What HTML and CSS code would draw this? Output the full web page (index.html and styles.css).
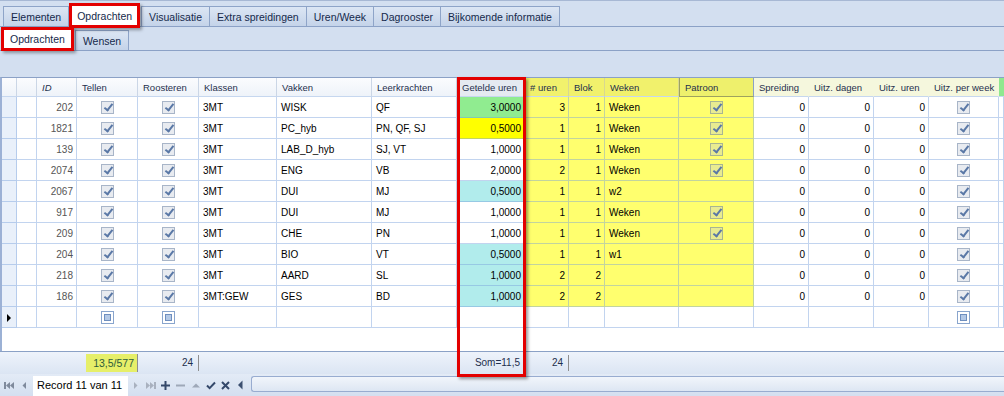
FILE: index.html
```html
<!DOCTYPE html>
<html lang="nl">
<head>
    <meta charset="UTF-8">
    <title>Opdrachten</title>
    <link rel="stylesheet" href="styles.css">
</head>
<body>
<div class="app">
    <div class="tabs tabs-main">
        <div class="tab">Elementen</div>
        <div class="tab active">Opdrachten</div>
        <div class="tab">Visualisatie</div>
        <div class="tab">Extra spreidingen</div>
        <div class="tab">Uren/Week</div>
        <div class="tab">Dagrooster</div>
        <div class="tab">Bijkomende informatie</div>
    </div>
    <div class="tabs tabs-sub">
        <div class="tab active">Opdrachten</div>
        <div class="tab">Wensen</div>
    </div>
    <div class="toolbar"></div>

    <div class="grid-wrap">
        <table class="grid">
            <colgroup>
                <col style="width:15px"><col style="width:20px"><col style="width:40px"><col style="width:61px"><col style="width:61px">
                <col style="width:78px"><col style="width:95px"><col style="width:85px"><col style="width:68px"><col style="width:44px">
                <col style="width:36px"><col style="width:74px"><col style="width:75px"><col style="width:55px"><col style="width:65px">
                <col style="width:55px"><col style="width:70px"><col style="width:5px">
            </colgroup>
            <thead>
                <tr>
                    <th class="ind"></th><th></th><th class="it">ID</th><th>Tellen</th><th>Roosteren</th>
                    <th>Klassen</th><th>Vakken</th><th>Leerkrachten</th><th class="hg">Getelde uren</th><th class="hy"># uren</th>
                    <th class="hy">Blok</th><th class="hy">Weken</th><th class="hp">Patroon</th><th class="hc">Spreiding</th><th class="hc">Uitz. dagen</th>
                    <th class="hc">Uitz. uren</th><th class="hc">Uitz. per week</th><th class="hx"></th>
                </tr>
            </thead>
            <tbody>
                <tr>
                    <td class="ind"></td><td></td><td class="num id">202</td><td class="c"><span class="cb on"></span></td><td class="c"><span class="cb on"></span></td>
                    <td>3MT</td><td>WISK</td><td>QF</td><td class="num green">3,0000</td><td class="num y">3</td>
                    <td class="num y">1</td><td class="y">Weken</td><td class="c y"><span class="cb on"></span></td><td class="num">0</td><td class="num">0</td>
                    <td class="num">0</td><td class="c"><span class="cb on"></span></td><td></td>
                </tr>
                <tr>
                    <td class="ind"></td><td></td><td class="num id">1821</td><td class="c"><span class="cb on"></span></td><td class="c"><span class="cb on"></span></td>
                    <td>3MT</td><td>PC_hyb</td><td>PN, QF, SJ</td><td class="num yellow">0,5000</td><td class="num y">1</td>
                    <td class="num y">1</td><td class="y">Weken</td><td class="c y"><span class="cb on"></span></td><td class="num">0</td><td class="num">0</td>
                    <td class="num">0</td><td class="c"><span class="cb on"></span></td><td></td>
                </tr>
                <tr>
                    <td class="ind"></td><td></td><td class="num id">139</td><td class="c"><span class="cb on"></span></td><td class="c"><span class="cb on"></span></td>
                    <td>3MT</td><td>LAB_D_hyb</td><td>SJ, VT</td><td class="num">1,0000</td><td class="num y">1</td>
                    <td class="num y">1</td><td class="y">Weken</td><td class="c y"><span class="cb on"></span></td><td class="num">0</td><td class="num">0</td>
                    <td class="num">0</td><td class="c"><span class="cb on"></span></td><td></td>
                </tr>
                <tr>
                    <td class="ind"></td><td></td><td class="num id">2074</td><td class="c"><span class="cb on"></span></td><td class="c"><span class="cb on"></span></td>
                    <td>3MT</td><td>ENG</td><td>VB</td><td class="num">2,0000</td><td class="num y">2</td>
                    <td class="num y">1</td><td class="y">Weken</td><td class="c y"><span class="cb on"></span></td><td class="num">0</td><td class="num">0</td>
                    <td class="num">0</td><td class="c"><span class="cb on"></span></td><td></td>
                </tr>
                <tr>
                    <td class="ind"></td><td></td><td class="num id">2067</td><td class="c"><span class="cb on"></span></td><td class="c"><span class="cb on"></span></td>
                    <td>3MT</td><td>DUI</td><td>MJ</td><td class="num cyan">0,5000</td><td class="num y">1</td>
                    <td class="num y">1</td><td class="y">w2</td><td class="c y"></td><td class="num">0</td><td class="num">0</td>
                    <td class="num">0</td><td class="c"><span class="cb on"></span></td><td></td>
                </tr>
                <tr>
                    <td class="ind"></td><td></td><td class="num id">917</td><td class="c"><span class="cb on"></span></td><td class="c"><span class="cb on"></span></td>
                    <td>3MT</td><td>DUI</td><td>MJ</td><td class="num">1,0000</td><td class="num y">1</td>
                    <td class="num y">1</td><td class="y">Weken</td><td class="c y"><span class="cb on"></span></td><td class="num">0</td><td class="num">0</td>
                    <td class="num">0</td><td class="c"><span class="cb on"></span></td><td></td>
                </tr>
                <tr>
                    <td class="ind"></td><td></td><td class="num id">209</td><td class="c"><span class="cb on"></span></td><td class="c"><span class="cb on"></span></td>
                    <td>3MT</td><td>CHE</td><td>PN</td><td class="num">1,0000</td><td class="num y">1</td>
                    <td class="num y">1</td><td class="y">Weken</td><td class="c y"><span class="cb on"></span></td><td class="num">0</td><td class="num">0</td>
                    <td class="num">0</td><td class="c"><span class="cb on"></span></td><td></td>
                </tr>
                <tr>
                    <td class="ind"></td><td></td><td class="num id">204</td><td class="c"><span class="cb on"></span></td><td class="c"><span class="cb on"></span></td>
                    <td>3MT</td><td>BIO</td><td>VT</td><td class="num cyan">0,5000</td><td class="num y">1</td>
                    <td class="num y">1</td><td class="y">w1</td><td class="c y"></td><td class="num">0</td><td class="num">0</td>
                    <td class="num">0</td><td class="c"><span class="cb on"></span></td><td></td>
                </tr>
                <tr>
                    <td class="ind"></td><td></td><td class="num id">218</td><td class="c"><span class="cb on"></span></td><td class="c"><span class="cb on"></span></td>
                    <td>3MT</td><td>AARD</td><td>SL</td><td class="num cyan">1,0000</td><td class="num y">2</td>
                    <td class="num y">2</td><td class="y"></td><td class="c y"></td><td class="num">0</td><td class="num">0</td>
                    <td class="num">0</td><td class="c"><span class="cb on"></span></td><td></td>
                </tr>
                <tr>
                    <td class="ind"></td><td></td><td class="num id">186</td><td class="c"><span class="cb on"></span></td><td class="c"><span class="cb on"></span></td>
                    <td>3MT:GEW</td><td>GES</td><td>BD</td><td class="num cyan">1,0000</td><td class="num y">2</td>
                    <td class="num y">2</td><td class="y"></td><td class="c y"></td><td class="num">0</td><td class="num">0</td>
                    <td class="num">0</td><td class="c"><span class="cb on"></span></td><td></td>
                </tr>
                <tr class="new">
                    <td class="ind"><span class="arrow"></span></td><td></td><td></td><td class="c"><span class="cb off"></span></td><td class="c"><span class="cb off"></span></td>
                    <td></td><td></td><td></td><td></td><td></td>
                    <td></td><td></td><td></td><td></td><td></td>
                    <td></td><td class="c"><span class="cb off"></span></td><td></td>
                </tr>
            </tbody>
        </table>
    </div>

    <div class="summary">
        <div></div>
        <div><span class="hl">13,5/577</span></div>
        <div><span class="sum-val divider">24</span></div>
        <div></div>
        <div><span class="sum-val">Som=11,5</span></div>
        <div><span class="sum-val divider">24</span></div>
        <div></div>
    </div>

    <div class="nav">
        <span class="nb"><svg width="11" height="9" viewBox="0 0 11 9"><rect x="0" y="1" width="2" height="7" fill="#7f8a9c"/><path d="M6 1v7L2 4.5z M10 1v7L6 4.5z" fill="#7f8a9c"/></svg></span>
        <span class="nb"><svg width="5" height="9" viewBox="0 0 5 9"><path d="M4 1v7L0.5 4.5z" fill="#7f8a9c"/></svg></span>
        <span class="record">Record 11 van 11</span>
        <span class="nb"><svg width="5" height="9" viewBox="0 0 5 9"><path d="M1 1v7L4.5 4.5z" fill="#a9b1bf"/></svg></span>
        <span class="nb"><svg width="11" height="9" viewBox="0 0 11 9"><path d="M1 1v7L5 4.5z M5 1v7L9 4.5z" fill="#a9b1bf"/><rect x="9" y="1" width="2" height="7" fill="#a9b1bf"/></svg></span>
        <span class="nb"><svg width="9" height="9" viewBox="0 0 9 9"><path d="M0 3.5h9v2H0z M3.5 0h2v9h-2z" fill="#34486a"/></svg></span>
        <span class="nb"><svg width="9" height="9" viewBox="0 0 9 9"><path d="M0 3.5h9v2H0z" fill="#9ea8b8"/></svg></span>
        <span class="nb"><svg width="8" height="9" viewBox="0 0 8 9"><path d="M0 6.5h8L4 2.5z" fill="#9ea8b8"/></svg></span>
        <span class="nb"><svg width="10" height="9" viewBox="0 0 10 9"><path d="M1 4.5l2.6 2.6L9 1.5" fill="none" stroke="#34486a" stroke-width="2"/></svg></span>
        <span class="nb"><svg width="9" height="9" viewBox="0 0 9 9"><path d="M1 1l7 7M8 1l-7 7" fill="none" stroke="#34486a" stroke-width="2"/></svg></span>
        <span class="nb"><svg width="5" height="10" viewBox="0 0 5 10"><path d="M4.5 0.5v9L0 5z" fill="#3b4f70"/></svg></span>
        <span class="scroll"></span>
    </div>

    <div class="mark-col"></div>
</div>
</body>
</html>
```

FILE: styles.css
```css
body {
    margin: 0;
    font-family: "Liberation Sans", Arial, sans-serif;
    background-color: #d3dff0;
}
.app {
    position: relative;
    width: 1004px;
    height: 396px;
    display: flex;
    flex-direction: column;
    overflow: hidden;
    background-color: #d3dff0;
}

/* tabs */
.tabs {
    display: flex;
    align-items: flex-end;
    flex: none;
    border-bottom: 1px solid #8ba1c6;
}
.tabs-main {
    height: 25px;
    padding-left: 3px;
    border-top: 1px solid #a7b8d4;
}
.tabs-sub {
    height: 23px;
    padding-left: 1px;
}
.tab {
    display: flex;
    align-items: center;
    height: 19px;
    padding: 0 7px;
    margin-right: -1px;
    border: 1px solid #8ea4c8;
    border-bottom: none;
    background: linear-gradient(#dce6f4, #c4d3e9);
    color: #15294b;
    font-size: 10.5px;
    white-space: nowrap;
}
.tab.active {
    position: relative;
    z-index: 2;
    margin-left: 1px;
    margin-right: 1px;
    margin-bottom: -2px;
    padding: 0 5px;
    border: 3px solid #e30000;
    background: #fff;
    box-shadow: 2px 2px 3px rgba(0, 0, 0, 0.35);
}
.tabs-sub .tab.active {
    height: 18px;
    margin-left: 0;
    margin-bottom: -1px;
    padding: 0 6px;
}
.toolbar {
    flex: none;
    height: 26px;
}

/* grid */
.grid-wrap {
    flex: 1;
    background-color: #fff;
    border-top: 1px solid #8ba1c6;
    border-left: 2px solid #9cb1d5;
}
.grid {
    width: 1002px;
    table-layout: fixed;
    border-collapse: separate;
    border-spacing: 0;
}
.grid th {
    height: 18px;
    padding: 0 0 0 5px;
    border-right: 1px solid #cbd6e6;
    border-bottom: 1px solid #c6d7ef;
    background: linear-gradient(#fbfcfe, #eef3f9);
    color: #1e2f4d;
    font-size: 9.5px;
    font-weight: normal;
    text-align: left;
    white-space: nowrap;
    overflow: hidden;
}
.grid th.it {
    font-style: italic;
}
.grid th.hg {
    background: #e5eaf1;
}
.grid th.hy {
    background: #f1f16c;
    border-right-color: #d8d890;
}
.grid th.hp {
    background: #eef06c;
    border-left: 1px solid #9ea25e;
    border-bottom-color: #9ea25e;
    border-right-color: #8ba1c6;
}
.grid th.hc {
    background: #f5f7dd;
    border-right-color: #f5f7dd;
}
.grid th.hx {
    background: #8fe88f;
    border-right: none;
}
.grid td {
    height: 20px;
    padding: 0 4px;
    border-right: 1px solid rgba(120, 160, 220, 0.45);
    border-bottom: 1px solid rgba(120, 160, 220, 0.45);
    color: #000;
    font-size: 10px;
    white-space: nowrap;
    overflow: hidden;
}
.grid .ind {
    padding: 0;
    background-color: #e9f0fa;
}
.grid td.num {
    text-align: right;
    padding-right: 3px;
}
.grid td.id {
    color: #555;
}
.grid td.c {
    padding: 0;
    text-align: center;
}
.grid td.y {
    background-color: #ffff6e;
}
.grid td.green {
    background-color: #90ec90;
}
.grid td.yellow {
    background-color: #ffff00;
}
.grid td.cyan {
    background-color: #b1ecec;
}
.grid tr.new td {
    background-color: #fff;
}
.grid tr.new td.ind {
    background-color: #e9f0fa;
}
.arrow {
    display: inline-block;
    margin-left: 5px;
    border-left: 4px solid #000;
    border-top: 4px solid transparent;
    border-bottom: 4px solid transparent;
    vertical-align: middle;
}

/* checkboxes */
.cb {
    position: relative;
    display: inline-block;
    width: 13px;
    height: 13px;
    box-sizing: border-box;
    vertical-align: middle;
}
.cb.on {
    border: 1px solid rgba(90, 115, 150, 0.45);
    background: rgba(190, 198, 212, 0.35);
}
.cb.on::after {
    content: "";
    position: absolute;
    left: 4px;
    top: 0px;
    width: 3px;
    height: 7px;
    border-right: 2px solid #5a78a6;
    border-bottom: 2px solid #5a78a6;
    transform: rotate(38deg);
}
.cb.off {
    border: 1px solid #89a5cd;
    background: #fff;
    padding: 2px;
}
.cb.off::after {
    content: "";
    display: block;
    width: 7px;
    height: 7px;
    box-sizing: border-box;
    border: 1px solid #6f8fbf;
    background: #b4c9e6;
}

/* summary row */
.summary {
    flex: none;
    height: 22px;
    display: grid;
    grid-template-columns: 77px 61px 61px 258px 68px 44px 1fr;
    align-items: center;
    border-top: 1px solid #8ba1c6;
    background: linear-gradient(#eef3fb, #dbe5f3);
    color: #1e2f4d;
    font-size: 10px;
}
.summary > div {
    display: flex;
    justify-content: flex-end;
}
.hl {
    flex: 1;
    margin-left: 9px;
    height: 18px;
    line-height: 18px;
    padding-right: 3px;
    text-align: right;
    background-color: #e6ef69;
    border-right: 1px solid #8e8e8e;
    color: #2b5c3c;
    font-size: 10.5px;
}
.sum-val {
    line-height: 16px;
    padding-right: 5px;
}
.sum-val.divider {
    border-right: 1px solid #8e8e8e;
}

/* navigator */
.nav {
    flex: none;
    height: 22px;
    display: flex;
    align-items: center;
    padding-left: 2px;
    background: linear-gradient(#e3ebf6, #d4dff0);
}
.nb {
    width: 15px;
    display: flex;
    justify-content: center;
    align-items: center;
}
.nb svg {
    display: block;
}
.record {
    align-self: flex-end;
    width: 91px;
    height: 20px;
    margin-left: 1px;
    padding-left: 4px;
    line-height: 19px;
    background-color: #fff;
    color: #000;
    font-size: 11px;
}
.scroll {
    flex: 1;
    align-self: flex-start;
    height: 14px;
    margin-top: 2px;
    margin-left: 3px;
    border: 1px solid #98acd0;
    border-right: none;
    border-radius: 3px 0 0 3px;
    background: linear-gradient(#f1f5fb, #dde6f3);
}

/* red marker around the column */
.mark-col {
    position: absolute;
    left: 457px;
    top: 77px;
    width: 69px;
    height: 300px;
    box-sizing: border-box;
    border: 3px solid #e30000;
    box-shadow: 2px 2px 3px rgba(0, 0, 0, 0.4);
    pointer-events: none;
}
```
